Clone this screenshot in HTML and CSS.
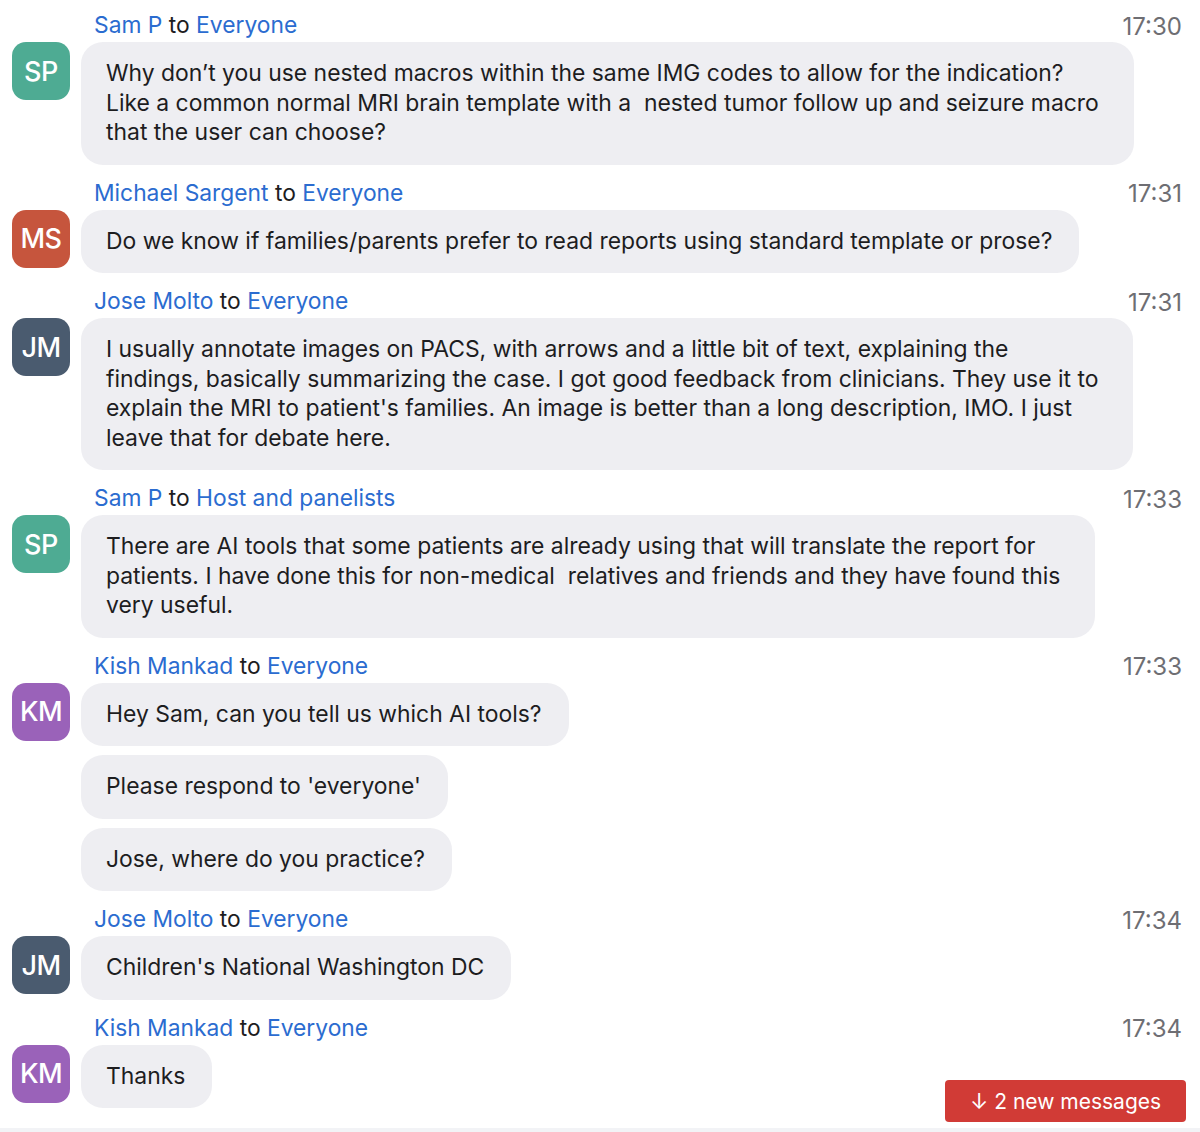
FILE: index.html
```html
<!DOCTYPE html>
<html>
<head>
<meta charset="utf-8">
<link rel="stylesheet" href="styles.css">
</head>
<body>
<div class="chat">
  <div class="msg">
    <div class="head"><span class="who"><span class="name">Sam P</span> to <span class="name">Everyone</span></span><span class="time">17:30</span></div>
    <div class="row">
      <div class="avatar sp">SP</div>
      <div class="bubbles">
        <div class="bubble multi">Why don’t you use nested macros within the same IMG codes to allow for the indication?<br>Like a common normal MRI brain template with a&nbsp; nested tumor follow up and seizure macro<br>that the user can choose?</div>
      </div>
    </div>
  </div>
  <div class="msg">
    <div class="head"><span class="who"><span class="name">Michael Sargent</span> to <span class="name">Everyone</span></span><span class="time">17:31</span></div>
    <div class="row">
      <div class="avatar ms">MS</div>
      <div class="bubbles">
        <div class="bubble">Do we know if families/parents prefer to read reports using standard template or prose?</div>
      </div>
    </div>
  </div>
  <div class="msg">
    <div class="head"><span class="who"><span class="name">Jose Molto</span> to <span class="name">Everyone</span></span><span class="time">17:31</span></div>
    <div class="row">
      <div class="avatar jm">JM</div>
      <div class="bubbles">
        <div class="bubble multi">I usually annotate images on PACS, with arrows and a little bit of text, explaining the<br>findings, basically summarizing the case. I got good feedback from clinicians. They use it to<br>explain the MRI to patient's families. An image is better than a long description, IMO. I just<br>leave that for debate here.</div>
      </div>
    </div>
  </div>
  <div class="msg">
    <div class="head"><span class="who"><span class="name">Sam P</span> to <span class="name">Host and panelists</span></span><span class="time">17:33</span></div>
    <div class="row">
      <div class="avatar sp">SP</div>
      <div class="bubbles">
        <div class="bubble multi">There are AI tools that some patients are already using that will translate the report for<br>patients. I have done this for non-medical&nbsp; relatives and friends and they have found this<br>very useful.</div>
      </div>
    </div>
  </div>
  <div class="msg">
    <div class="head"><span class="who"><span class="name">Kish Mankad</span> to <span class="name">Everyone</span></span><span class="time">17:33</span></div>
    <div class="row">
      <div class="avatar km">KM</div>
      <div class="bubbles">
        <div class="bubble">Hey Sam, can you tell us which AI tools?</div>
        <div class="bubble">Please respond to 'everyone'</div>
        <div class="bubble">Jose, where do you practice?</div>
      </div>
    </div>
  </div>
  <div class="msg">
    <div class="head"><span class="who"><span class="name">Jose Molto</span> to <span class="name">Everyone</span></span><span class="time">17:34</span></div>
    <div class="row">
      <div class="avatar jm">JM</div>
      <div class="bubbles">
        <div class="bubble">Children's National Washington DC</div>
      </div>
    </div>
  </div>
  <div class="msg">
    <div class="head"><span class="who"><span class="name">Kish Mankad</span> to <span class="name">Everyone</span></span><span class="time">17:34</span></div>
    <div class="row">
      <div class="avatar km">KM</div>
      <div class="bubbles">
        <div class="bubble">Thanks</div>
      </div>
    </div>
  </div>
  <button class="new-msgs"><span class="arrow">↓</span> 2 new messages</button>
</div>
</body>
</html>
```
FILE: styles.css
```css
html, body {
  margin: 0;
  padding: 0;
  background: #ffffff;
}
body {
  font-family: Inter, "Noto Sans", "Liberation Sans", sans-serif;
  color: #1d1d1f;
}
.chat {
  position: relative;
  border-bottom: 4px solid #f2f3f6;
  padding: 12px 18px 0 12px;
  box-sizing: border-box;
  height: 1132px;
  overflow: hidden;
}
.msg {
  margin-bottom: 15px;
}
.head {
  display: flex;
  justify-content: space-between;
  align-items: center;
  height: 26px;
  margin-bottom: 4px;
  padding-left: 82px;
  font-size: 22.8px;
  line-height: 26px;
  color: #1d1d1f;
}
.name {
  color: #2b6cd0;
}
.time {
  color: #6e6e73;
  font-size: 24px;
  padding-top: 3px;
}
.row {
  display: flex;
  align-items: flex-start;
  gap: 11px;
}
.avatar {
  flex: none;
  width: 58px;
  height: 58px;
  border-radius: 14px;
  color: #fff;
  font-size: 27px;
  font-weight: 500;
  display: flex;
  align-items: center;
  justify-content: center;
  letter-spacing: -0.5px;
}
.sp { background: #4eab93; }
.ms { background: #c6553d; }
.jm { background: #4a5b6f; }
.km { background: #9a62b9; }
.bubbles {
  display: flex;
  flex-direction: column;
  align-items: flex-start;
  gap: 9px;
}
.bubble {
  background: #eeeef2;
  border-radius: 22px;
  padding: 17px 27px 17px 25px;
  font-size: 22.9px;
  line-height: 29.5px;
  color: #1d1d1f;
}
.bubble.multi {
  padding-right: 35px;
}
.new-msgs {
  position: absolute;
  right: 14px;
  top: 1080px;
  width: 241px;
  height: 42px;
  background: #d13b36;
  color: #fff;
  border: none;
  border-radius: 4px;
  font-family: Inter, "Noto Sans", "Liberation Sans", sans-serif;
  font-size: 21px;
  display: flex;
  align-items: center;
  justify-content: center;
  gap: 6px;
  padding: 0;
}
.arrow {
  font-size: 22px;
}
```
